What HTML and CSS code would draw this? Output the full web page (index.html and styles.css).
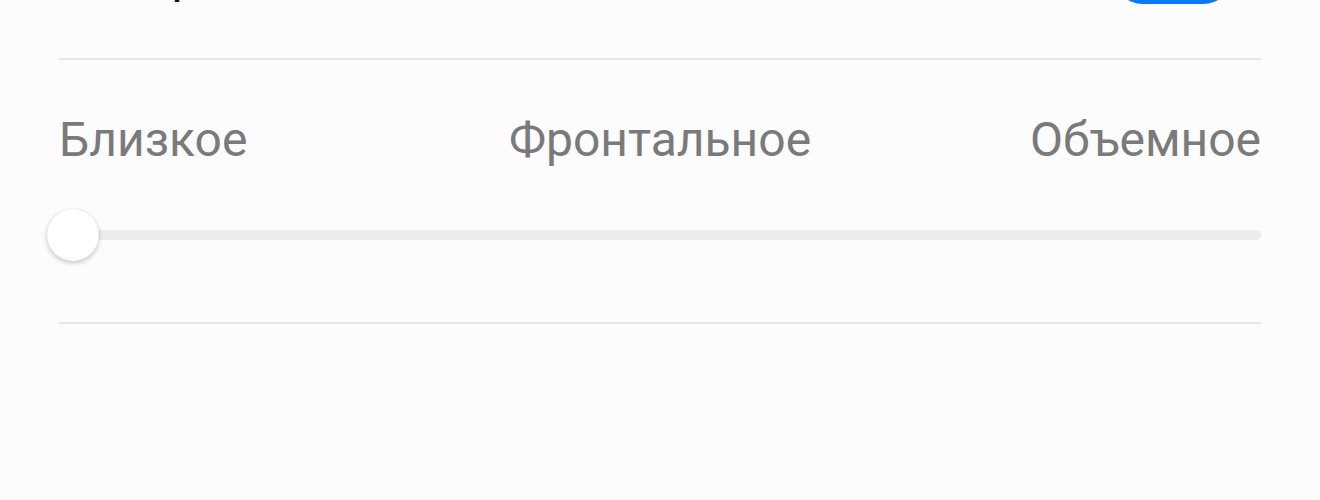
FILE: index.html
```html
<!DOCTYPE html>
<html lang="ru">
<head>
<meta charset="utf-8">
<title>Звук</title>
<link rel="stylesheet" href="styles.css">
</head>
<body>
<div class="page">
  <div class="header">
    <div class="title">Настройка</div>
    <div class="toggle"></div>
  </div>
  <div class="divider"></div>
  <div class="section">
    <div class="labels">
      <span class="label label-left">Близкое</span>
      <span class="label label-center">Фронтальное</span>
      <span class="label label-right">Объемное</span>
    </div>
    <div class="slider">
      <div class="track"></div>
      <div class="thumb"></div>
    </div>
  </div>
  <div class="divider"></div>
</div>
</body>
</html>
```
FILE: styles.css
```css
html, body {
  margin: 0;
  padding: 0;
  background: #fcfcfc;
}
body {
  font-family: Roboto, "Noto Sans", sans-serif;
  overflow: hidden;
  height: 500px;
}
.page {
  padding: 0 59px;
}
.header {
  height: 58px;
  display: flex;
  justify-content: space-between;
  align-items: flex-start;
}
.title {
  font-size: 48px;
  line-height: 56px;
  margin-top: -52px;
  margin-left: 4px;
  color: #111;
}
.toggle {
  width: 120px;
  height: 60px;
  margin-top: -56px;
  margin-right: 28px;
  border-radius: 30px;
  background: #037aff;
}
.divider {
  height: 2px;
  background: #e6e6e6;
}
.section {
  padding-top: 52px;
  padding-bottom: 61px;
}
.labels {
  display: grid;
  grid-template-columns: 1fr auto 1fr;
}
.label {
  font-size: 48px;
  line-height: 56px;
  color: #7a7a7a;
}
.label-left { justify-self: start; }
.label-center { justify-self: center; }
.label-right { justify-self: end; }
.slider {
  margin-top: 41px;
  height: 52px;
  position: relative;
  display: flex;
  align-items: center;
}
.track {
  flex: 1;
  height: 10px;
  border-radius: 5px;
  background: #ececec;
}
.thumb {
  position: absolute;
  left: -12px;
  top: 0;
  width: 52px;
  height: 52px;
  border-radius: 50%;
  background: #fff;
  box-shadow: 0 2px 5px rgba(0,0,0,0.22), 0 0 1px rgba(0,0,0,0.12);
}
```
